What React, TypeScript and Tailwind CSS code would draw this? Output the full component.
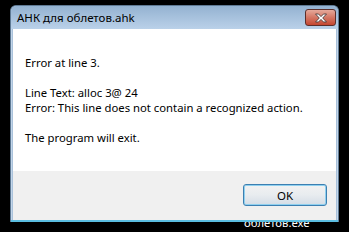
import React from "react";

const font = { fontFamily: '"Noto Sans", "Open Sans", sans-serif' };

function CloseGlyph() {
  return (
    <svg width="14" height="10" viewBox="0 0 14 10">
      <path
        d="M1.5 1 H4.5 L7 3.6 L9.5 1 H12.5 L8.7 5 L12.5 9 H9.5 L7 6.4 L4.5 9 H1.5 L5.3 5 Z"
        fill="#ffffff"
        stroke="#4a3a3a"
        strokeWidth="0.9"
        strokeLinejoin="round"
      />
    </svg>
  );
}

export default function App() {
  return (
    <div className="relative w-[349px] h-[232px] bg-black overflow-hidden" style={font}>
      {/* desktop icon label behind the dialog */}
      <div className="absolute left-[244px] top-[215px] text-[11.3px] leading-[15px] text-white">
        облетов.exe
      </div>

      <div className="absolute left-[10px] top-[5px] w-[329px] h-[217px] flex flex-col rounded-t-[6px] bg-[#c3d6ea] border border-[#5f7a94] border-b-0 overflow-hidden">
        {/* title bar */}
        <div className="relative h-[23px] shrink-0 flex items-center pl-[6px] bg-gradient-to-b from-[#94b2d1] to-[#bad1e9]">
          <span className="text-[11.5px] leading-[15px] text-black">АНК для облетов.ahk</span>
          <button className="absolute right-[2px] top-[3px] w-[31px] h-[17px] rounded-[3px] border border-[#5b2e2a] bg-gradient-to-b from-[#e5a99b] via-[#d47664] to-[#c4452f] flex items-center justify-center">
            <CloseGlyph />
          </button>
        </div>

        {/* content */}
        <div className="flex-1 flex flex-col mx-[1px] border-l border-r border-[#a9c1da]">
          <div className="h-[142px] bg-white pl-[12px] pt-[26px] text-[11.3px] leading-[15px] text-black">
            <p>Error at line 3.</p>
            <p className="mt-[15px]">Line Text: alloc 3@ 24</p>
            <p>Error: This line does not contain a recognized action.</p>
            <p className="mt-[15px]">The program will exit.</p>
          </div>
          <div className="flex-1 bg-[#f0f0f0] flex justify-end pt-[13px] pr-[9px]">
            <button className="w-[84px] h-[22px] rounded-[3px] border border-[#3c7fb1] bg-gradient-to-b from-[#f2f2f2] via-[#e8ecef] to-[#d4dde6] shadow-[inset_0_0_0_1px_#8fd0ef] text-[11.5px] leading-[15px] text-black">
              OK
            </button>
          </div>
        </div>
        <div className="h-[2px] shrink-0 bg-[#5bbde0]" />
      </div>
    </div>
  );
}
